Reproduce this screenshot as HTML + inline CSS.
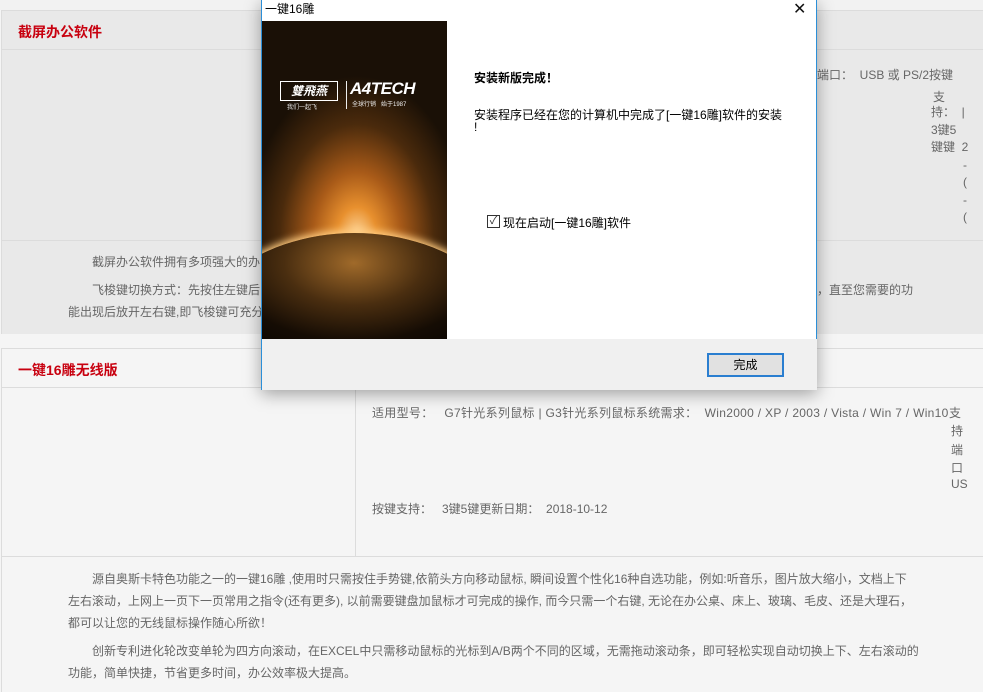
<!DOCTYPE html>
<html><head><meta charset="utf-8"><style>
*{margin:0;padding:0;box-sizing:border-box}
body{width:983px;height:692px;overflow:hidden;background:#f5f5f5;font-family:"Liberation Sans","Noto Sans CJK SC",sans-serif;position:relative;color:#666;font-size:12px}
.a{position:absolute}
.red{color:#c8000f;font-weight:bold;font-size:14px}
.line{position:absolute;background:#dcdcdc;height:1px}
.t{position:absolute;white-space:nowrap;font-size:12px;color:#666}
</style></head><body>
<div class="a" style="left:0;top:0;width:983px;height:10px;background:#f2f2f2"></div>
<div class="a" style="left:2px;top:10px;width:981px;height:324px;background:#e9e9e9"></div>
<div class="line" style="left:2px;top:10px;width:981px"></div>
<div class="line" style="left:2px;top:49px;width:981px"></div>
<div class="line" style="left:2px;top:240px;width:981px"></div>
<div class="a" style="left:1px;top:10px;width:1px;height:324px;background:#dcdcdc"></div>
<div class="a red" style="left:18px;top:22px">截屏办公软件</div>
<div class="t" style="left:817px;top:66px">端口：&nbsp; USB 或 PS/2按键 &nbsp;</div>
<div class="t" style="left:933px;top:88px">支</div>
<div class="t" style="left:931px;top:103px">持： &nbsp;|</div>
<div class="t" style="left:931px;top:121px">3键5</div>
<div class="t" style="left:931px;top:138px">键键 &nbsp;2</div>
<div class="t" style="left:963px;top:158px">-</div>
<div class="t" style="left:963px;top:175px">(</div>
<div class="t" style="left:963px;top:193px">-</div>
<div class="t" style="left:963px;top:210px">(</div>
<div class="t" style="left:92px;top:253px">截屏办公软件拥有多项强大的办</div>
<div class="t" style="left:92px;top:281px">飞梭键切换方式：先按住左键后</div>
<div class="t" style="left:68px;top:303px">能出现后放开左右键,即飞梭键可充分</div>
<div class="t" style="left:817px;top:281px">，直至您需要的功</div>
<div class="line" style="left:2px;top:348px;width:981px"></div>
<div class="line" style="left:2px;top:387px;width:981px"></div>
<div class="line" style="left:2px;top:556px;width:981px"></div>
<div class="a" style="left:1px;top:348px;width:1px;height:344px;background:#dcdcdc"></div>
<div class="a" style="left:355px;top:387px;width:1px;height:169px;background:#dcdcdc"></div>
<div class="a red" style="left:18px;top:360px">一键16雕无线版</div>
<div class="t" style="left:372px;top:404px;letter-spacing:0.3px">适用型号： &nbsp; G7针光系列鼠标 | G3针光系列鼠标系统需求： &nbsp;Win2000 / XP / 2003 / Vista / Win 7 / Win10</div>
<div class="t" style="left:949px;top:404px">支</div>
<div class="t" style="left:951px;top:422px">持</div>
<div class="t" style="left:951px;top:441px">端</div>
<div class="t" style="left:951px;top:459px">口</div>
<div class="t" style="left:951px;top:477px">US</div>
<div class="t" style="left:372px;top:500px">按键支持： &nbsp; 3键5键更新日期： &nbsp;2018-10-12</div>
<div class="t" style="left:92px;top:570px">源自奥斯卡特色功能之一的一键16雕 ,使用时只需按住手势键,依箭头方向移动鼠标, 瞬间设置个性化16种自选功能，例如:听音乐，图片放大缩小，文档上下</div>
<div class="t" style="left:68px;top:592px">左右滚动，上网上一页下一页常用之指令(还有更多), 以前需要键盘加鼠标才可完成的操作, 而今只需一个右键, 无论在办公桌、床上、玻璃、毛皮、还是大理石，</div>
<div class="t" style="left:68px;top:614px">都可以让您的无线鼠标操作随心所欲！</div>
<div class="t" style="left:92px;top:642px">创新专利进化轮改变单轮为四方向滚动，在EXCEL中只需移动鼠标的光标到A/B两个不同的区域，无需拖动滚动条，即可轻松实现自动切换上下、左右滚动的</div>
<div class="t" style="left:68px;top:664px">功能，简单快捷，节省更多时间，办公效率极大提高。</div>
<div class="a" style="left:261px;top:0;width:556px;height:390px;background:#fff;border:1px solid #2b8fd8;border-top:none;box-shadow:0 4px 16px rgba(0,0,0,.35)">
 <div class="a" style="left:3px;top:0;font-size:12px;color:#000">一键16雕</div>
 <div class="a" style="left:531px;top:-1px;font-size:16px;color:#111;font-weight:normal">✕</div>
 <div class="a" style="left:0;top:21px;width:185px;height:318px;overflow:hidden;background:radial-gradient(ellipse 110px 160px at 95px 215px,#ffd9a0 0%,#e8902e 18%,#a85a18 40%,#4a2a0c 70%,#1a1006 100%)">
   <div class="a" style="left:-90px;top:212px;width:365px;height:300px;border-radius:50%;background:radial-gradient(ellipse 200px 120px at 182px 30px,#a06a2a 0%,#4a2e10 35%,#150c04 65%,#020100 100%);box-shadow:0 -3px 8px #ffcc80"></div>
   <div class="a" style="left:18px;top:60px;width:58px;height:20px;border:1px solid #fff;color:#fff;font-size:12px;text-align:center;font-weight:bold;font-style:italic">雙飛燕</div>
   <div class="a" style="left:25px;top:81px;color:#eee;font-size:6px">我们一起飞</div>
   <div class="a" style="left:84px;top:60px;width:1px;height:28px;background:#eee"></div>
   <div class="a" style="left:88px;top:58px;color:#fff;font-size:17px;font-weight:bold;font-style:italic;letter-spacing:-0.5px">A4TECH</div>
   <div class="a" style="left:90px;top:78px;color:#eee;font-size:6px">全球行销 &nbsp; 始于1987</div>
 </div>
 <div class="a" style="left:212px;top:69px;font-size:12px;font-weight:bold;color:#000">安装新版完成！</div>
 <div class="a" style="left:212px;top:109px;font-size:12px;color:#000;line-height:12px">安装程序已经在您的计算机中完成了[一键16雕]软件的安装<br>!</div>
 <div class="a" style="left:225px;top:215px;width:13px;height:13px;border:1px solid #333;font-size:11px;line-height:11px;text-align:center;color:#333">✓</div>
 <div class="a" style="left:241px;top:214px;font-size:12px;color:#000">现在启动[一键16雕]软件</div>
 <div class="a" style="left:0;top:339px;width:555px;height:51px;background:#f0f0f0"></div>
 <div class="a" style="left:445px;top:353px;width:77px;height:24px;border:2px solid #2a7ed0;background:#e1e1e1;font-size:12px;color:#000;text-align:center;line-height:20px">完成</div>
</div>
</body></html>
